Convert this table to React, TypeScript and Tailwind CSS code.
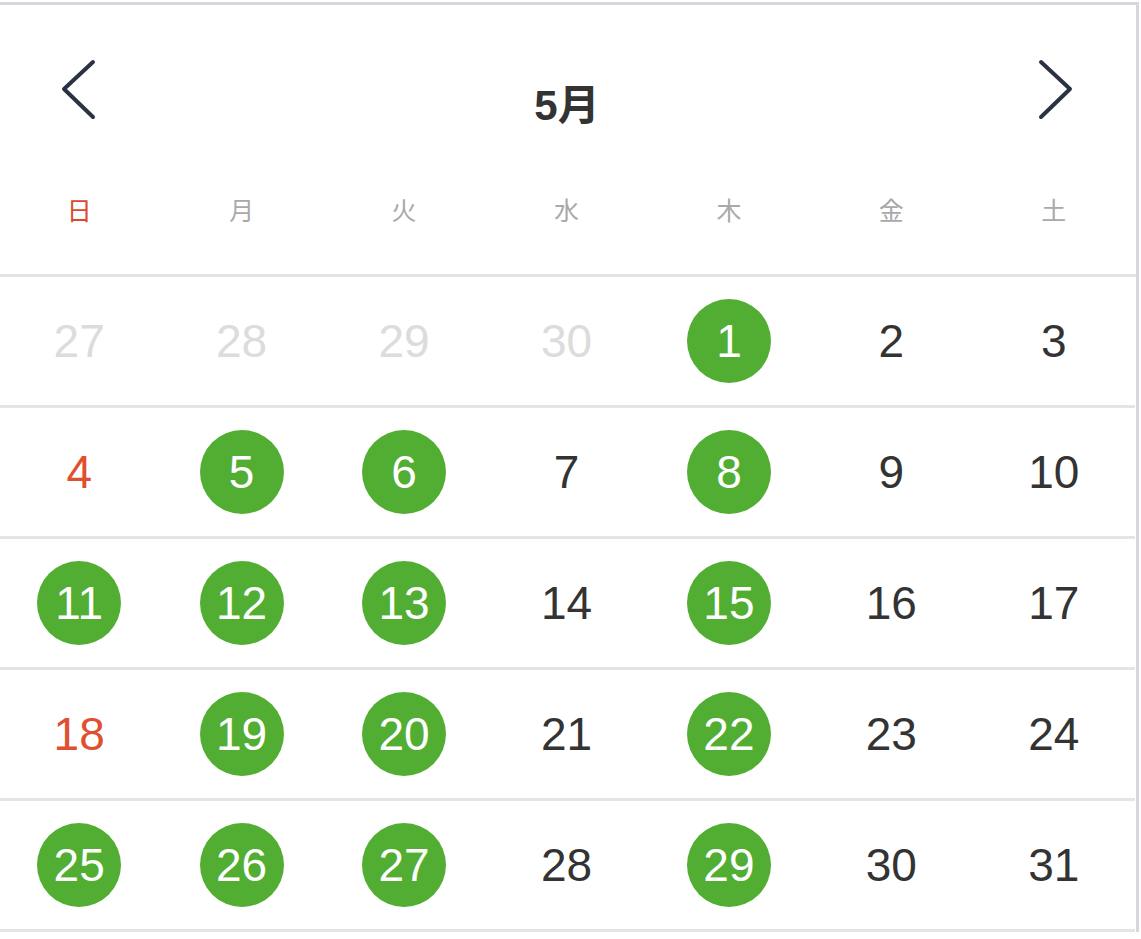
import React from 'react';

const WEEKDAYS = ['日', '月', '火', '水', '木', '金', '土'];
const MARKED = [1, 5, 6, 8, 11, 12, 13, 15, 19, 20, 22, 25, 26, 27, 29];

type Cell = { day: number; outside: boolean; sunday: boolean };

function buildWeeks(): Cell[][] {
  const cells: Cell[] = [];
  [27, 28, 29, 30].forEach((d) => cells.push({ day: d, outside: true, sunday: false }));
  for (let d = 1; d <= 31; d++) {
    cells.push({ day: d, outside: false, sunday: cells.length % 7 === 0 });
  }
  const weeks: Cell[][] = [];
  for (let i = 0; i < cells.length; i += 7) weeks.push(cells.slice(i, i + 7));
  return weeks;
}

function Chevron({ dir }: { dir: 'left' | 'right' }) {
  const d = dir === 'left' ? 'M33 4 L4 31 L33 59' : 'M5 4 L34 31 L5 59';
  return (
    <svg width="38" height="63" viewBox="0 0 38 63" fill="none">
      <path d={d} stroke="#2b3242" strokeWidth="4" strokeLinecap="round" strokeLinejoin="round" />
    </svg>
  );
}

function DayCell({ cell }: { cell: Cell }) {
  const marked = !cell.outside && MARKED.includes(cell.day);
  let color = 'text-[#333333]';
  if (cell.outside) color = 'text-[#dcdcdc]';
  else if (marked) color = 'text-white';
  else if (cell.sunday) color = 'text-[#e0502f]';

  return (
    <div className="flex items-center justify-center">
      <div
        className={`w-[84px] h-[84px] rounded-full flex items-center justify-center text-[46px] leading-none ${color} ${
          marked ? 'bg-[#52ae32]' : ''
        }`}
      >
        {cell.day}
      </div>
    </div>
  );
}

export default function App() {
  const weeks = buildWeeks();

  return (
    <div
      className="w-[1141px] h-[939px] bg-white pt-[2px] overflow-hidden"
      style={{ fontFamily: '"Liberation Sans", "Noto Sans CJK JP", sans-serif' }}
    >
      <div className="w-[1139px] border-t-[3px] border-r-[3px] border-[#d6d6dd]">
        <div className="h-[170px] flex items-start justify-between pl-[60px] pr-[62px]">
          <div className="mt-[53px]">
            <Chevron dir="left" />
          </div>
          <div className="mt-[80px] text-[42px] leading-none font-bold text-[#333333]">5月</div>
          <div className="mt-[53px]">
            <Chevron dir="right" />
          </div>
        </div>

        <div className="-ml-[2px] w-[1137px] h-[99px] grid grid-cols-7 pt-[22px]">
          {WEEKDAYS.map((w, i) => (
            <div
              key={w}
              className={`text-center text-[25px] leading-[28px] ${i === 0 ? 'text-[#d94a2c]' : 'text-[#a9a9a9]'}`}
            >
              {w}
            </div>
          ))}
        </div>

        <div className="border-t-[3px] border-[#e4e4e4]">
          {weeks.map((week, wi) => (
            <div
              key={wi}
              className="-ml-[2px] w-[1137px] h-[131px] grid grid-cols-7 border-b-[3px] border-[#e4e4e4]"
            >
              {week.map((cell, ci) => (
                <DayCell key={ci} cell={cell} />
              ))}
            </div>
          ))}
        </div>
      </div>
    </div>
  );
}
